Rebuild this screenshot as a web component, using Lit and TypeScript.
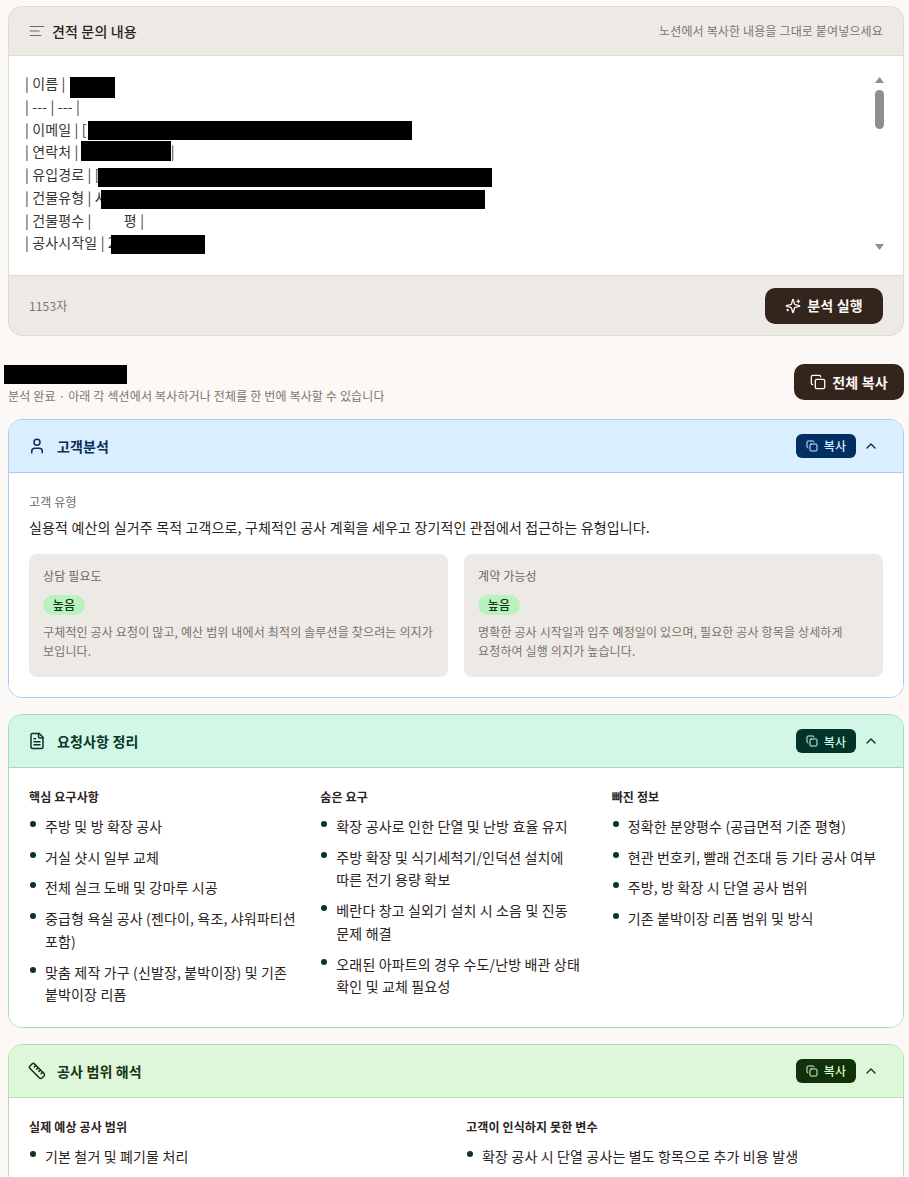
import { LitElement, html, css, svg } from "lit";
import { customElement } from "lit/decorators.js";

const icon = (body: unknown, cls = "") => html`<svg class="ic ${cls}" viewBox="0 0 24 24" fill="none" stroke="currentColor" stroke-width="2" stroke-linecap="round" stroke-linejoin="round">${body}</svg>`;
const copyIc = svg`<rect x="8" y="8" width="14" height="14" rx="2"/><path d="M4 16c-1.100 0-2-.9-2-2V4c0-1.100.9-2 2-2h10c1.100 0 2 .9 2 2"/>`;
const chevron = svg`<path d="m6 15 6-6 6 6"/>`;
const notes = svg`<path d="M21 6H3M15 12H3M17 18H3"/>`;
const user = svg`<path d="M19 21v-2a4 4 0 0 0-4-4H9a4 4 0 0 0-4 4v2"/><circle cx="12" cy="7" r="4"/>`;
const file = svg`<path d="M15 2H6a2 2 0 0 0-2 2v16a2 2 0 0 0 2 2h12a2 2 0 0 0 2-2V7Z"/><path d="M14 2v4a2 2 0 0 0 2 2h4M10 9H8M16 13H8M16 17H8"/>`;
const ruler = svg`<path d="M21.300 15.300a2.400 2.400 0 0 1 0 3.400l-2.600 2.600a2.400 2.400 0 0 1-3.400 0L2.700 8.700a2.410 2.410 0 0 1 0-3.400l2.600-2.600a2.410 2.410 0 0 1 3.400 0Z"/><path d="m14.500 12.500 2-2M11.500 9.500l2-2M8.500 6.500l2-2M17.500 15.500l2-2"/>`;
const sparkle = svg`<path d="M9.937 15.500A2 2 0 0 0 8.500 14.063l-6.135-1.582a.5.5 0 0 1 0-.962L8.500 9.936A2 2 0 0 0 9.937 8.500l1.582-6.135a.5.5 0 0 1 .963 0L14.063 8.500A2 2 0 0 0 15.500 9.937l6.135 1.581a.5.5 0 0 1 0 .964L15.500 14.063a2 2 0 0 0-1.437 1.437l-1.582 6.135a.5.5 0 0 1-.963 0z"/><path d="M20 3v4M22 5h-4M4 17v2M5 18H3"/>`;

const r = (w: number, h: number, off: number, ml = 0) => html`<span class="redact" style="width:${w}px;height:${h}px;vertical-align:${off}px;margin-left:${ml}px"></span>`;

@customElement("sec-card")
class SecCard extends LitElement {
  static properties = { heading: {}, tone: {} };
  heading = "";
  tone = "blue";
  ico: unknown = null;
  static styles = css`
    :host { display: block; }
    .card { border: 1px solid var(--bd); border-radius: 14px; overflow: hidden; background: #fff; }
    .blue { --bd: #a9cdf2; --hd: #d9efff; --ink: #0a2c57; --btn: #022f63; --btx: #d9efff; }
    .mint { --bd: #9fdcc0; --hd: #d2f7e6; --ink: #07352a; --btn: #03342a; --btx: #d2f7e6; }
    .lime { --bd: #b3dead; --hd: #def6da; --ink: #143414; --btn: #0f3208; --btx: #def6da; }
    .head { display: flex; align-items: center; height: 53px; padding: 0 24px 0 19px; background: var(--hd); border-bottom: 1px solid var(--bd); color: var(--ink); box-sizing: border-box; letter-spacing: .15px; }
    .ic { width: 18px; height: 18px; flex: none; }
    h3 { margin: 0 0 0 11px; font-size: 14px; font-weight: 700; flex: 1; color: var(--ink); }
    button { font: inherit; letter-spacing: inherit; display: flex; align-items: center; gap: 6px; height: 24px; width: 60px; justify-content: center; border: 0; border-radius: 6px; background: var(--btn); color: var(--btx); font-size: 12px; font-weight: 500; padding: 0; }
    button .ic { width: 12px; height: 12px; }
    .ic.chev { margin-left: 7px; width: 16px; height: 16px; }
  `;
  render() {
    return html`<section class="card ${this.tone}">
      <div class="head">
        ${icon(this.ico, "lead")}
        <h3>${this.heading}</h3>
        <button>${icon(copyIc)}복사</button>
        ${icon(chevron, "chev")}
      </div>
      <slot></slot>
    </section>`;
  }
}

@customElement("app-root")
class AppRoot extends LitElement {
  static styles = css`
    :host { display: block; height: 1177px; overflow: hidden; background: #fcf8f5; color: #2b2320; font-family: "Noto Sans CJK KR", "Noto Sans", sans-serif; font-size: 14px; line-height: 1.625; letter-spacing: .15px; word-break: keep-all; }
    * { box-sizing: border-box; }
    .page { display: flex; flex-direction: column; padding: 6px 5px 0 8px; }
    .redact { display: inline-block; background: #000; }
    .ic { width: 16px; height: 16px; flex: none; }

    .input { border: 1px solid #dfdbd6; border-radius: 14px; overflow: hidden; background: #edeae6; }
    .ihead { display: flex; align-items: center; height: 49px; padding: 0 20px 0 19px; border-bottom: 1px solid #dfdbd6; }
    .ihead .ic { width: 18px; height: 18px; stroke-width: 1.600; color: #6f6a65; }
    .ihead strong { margin-left: 6px; font-size: 14px; font-weight: 500; color: #2b2320; flex: 1; }
    .ihead small { font-size: 12px; color: #7c756f; }
    .ibody { position: relative; height: 219px; background: #fff; padding: 16px; overflow: hidden; white-space: nowrap; color: #3a3531; }
    .ibody .row { height: 22.750px; }
    .gap7 { display: inline-block; width: 29px; }
    .sb { position: absolute; top: 21px; right: 19px; width: 9px; height: 173px; }
    .sb i { position: absolute; left: 0; display: block; background: #8f8f8f; }
    .up { top: 0; width: 9px; height: 6px; clip-path: polygon(50% 0, 100% 100%, 0 100%); }
    .down { bottom: 0; width: 9px; height: 6px; clip-path: polygon(0 0, 100% 0, 50% 100%); }
    .sb .thumb { top: 13px; width: 9px; height: 39px; border-radius: 5px; }
    .ifoot { display: flex; align-items: center; justify-content: space-between; height: 60px; padding: 0 20px; border-top: 1px solid #dfdbd6; font-size: 12px; color: #7c756f; }
    .dark { font: inherit; letter-spacing: inherit; display: flex; align-items: center; justify-content: center; gap: 6px; height: 36px; border: 0; border-radius: 10px; background: #33251c; color: #fcf8f5; font-size: 14px; font-weight: 700; padding: 0; }
    .run { width: 118px; }
    .all { width: 110px; }

    .summary { display: flex; align-items: flex-start; justify-content: space-between; margin: 28px 0 19px; height: 36px; }
    .summary .ttl { display: block; margin: 1px 0 0 -4px; height: 19px; width: 123px; }
    .summary p { margin: 1.500px 0 0; font-size: 12px; line-height: 19px; color: #7c756f; }

    sec-card { margin-bottom: 16px; }
    .body { padding: 20px; background: #fff; }
    .lbl { font-size: 12px; color: #6f6862; line-height: 19.500px; margin-top: -1px; }
    .desc { margin: 4px 0 16px; color: #2b2320; }
    .two { display: grid; grid-template-columns: 1fr 1fr; gap: 16px; }
    .box { background: #edeae6; border-radius: 8px; padding: 13px 14px; height: 123px; }
    .pill { display: block; width: 42px; height: 20px; margin: 9px 0 7px; border-radius: 10px; background: #b9f2bf; color: #0e3a16; font-size: 12px; font-weight: 500; line-height: 20px; text-align: center; }
    .box p { margin: 0; font-size: 12px; color: #79726c; line-height: 19.500px; }

    .cols { display: grid; gap: 20px; }
    .c3 { grid-template-columns: repeat(3, 1fr); padding-bottom: 21px; }
    .c2 { grid-template-columns: repeat(2, 1fr); }
    h4 { margin: -1px 0 8px; font-size: 12px; font-weight: 700; line-height: 19.500px; color: #2b2320; }
    ul { list-style: none; margin: 0; padding: 0; display: flex; flex-direction: column; gap: 8px; }
    li { position: relative; padding-left: 16px; color: #2b2320; }
    li::before { content: ""; position: absolute; left: 1px; top: 6px; width: 6px; height: 6px; border-radius: 50%; background: var(--dot); }
    .m { --dot: #07352a; }
    .l { --dot: #143414; }
  `;

  render() {
    const rows = [
      html`| 이름 | ${r(45, 21, -9, 1)}`,
      html`| --- | --- |`,
      html`| 이메일 | [${r(324, 19, -5, 1)}`,
      html`| 연락처 | ${r(90, 20, -4, -1)}|`,
      html`| 유입경로 | [${r(394, 19, -7, -2)}`,
      html`| 건물유형 | 사${r(384, 19, -6, -7)}`,
      html`| 건물평수 | <span class="gap7"></span>평 |`,
      html`| 공사시작일 | 2${r(94, 19, -6, -5)}`,
    ];
    const core = ["주방 및 방 확장 공사", "거실 샷시 일부 교체", "전체 실크 도배 및 강마루 시공", "중급형 욕실 공사 (젠다이, 욕조, 샤워파티션 포함)", "맞춤 제작 가구 (신발장, 붙박이장) 및 기존 붙박이장 리폼"];
    const hidden = ["확장 공사로 인한 단열 및 난방 효율 유지", "주방 확장 및 식기세척기/인덕션 설치에 따른 전기 용량 확보", "베란다 창고 실외기 설치 시 소음 및 진동 문제 해결", "오래된 아파트의 경우 수도/난방 배관 상태 확인 및 교체 필요성"];
    const missing = ["정확한 분양평수 (공급면적 기준 평형)", "현관 번호키, 빨래 건조대 등 기타 공사 여부", "주방, 방 확장 시 단열 공사 범위", "기존 붙박이장 리폼 범위 및 방식"];
    const list = (a: string[]) => html`<ul>${a.map((t) => html`<li>${t}</li>`)}</ul>`;
    return html`<div class="page">
      <section class="input">
        <div class="ihead">${icon(notes)}<strong>견적 문의 내용</strong><small>노션에서 복사한 내용을 그대로 붙여넣으세요</small></div>
        <div class="ibody">
          ${rows.map((x) => html`<div class="row">${x}</div>`)}
          <div class="sb"><i class="up"></i><i class="thumb"></i><i class="down"></i></div>
        </div>
        <div class="ifoot"><span>1153자</span><button class="dark run">${icon(sparkle)}분석 실행</button></div>
      </section>

      <div class="summary">
        <div><span class="redact ttl"></span><p>분석 완료 · 아래 각 섹션에서 복사하거나 전체를 한 번에 복사할 수 있습니다</p></div>
        <button class="dark all">${icon(copyIc)}전체 복사</button>
      </div>

      <sec-card heading="고객분석" tone="blue" .ico=${user}>
        <div class="body">
          <div class="lbl">고객 유형</div>
          <p class="desc">실용적 예산의 실거주 목적 고객으로, 구체적인 공사 계획을 세우고 장기적인 관점에서 접근하는 유형입니다.</p>
          <div class="two">
            <div class="box"><div class="lbl">상담 필요도</div><span class="pill">높음</span><p>구체적인 공사 요청이 많고, 예산 범위 내에서 최적의 솔루션을 찾으려는 의지가 보입니다.</p></div>
            <div class="box"><div class="lbl">계약 가능성</div><span class="pill">높음</span><p>명확한 공사 시작일과 입주 예정일이 있으며, 필요한 공사 항목을 상세하게 요청하여 실행 의지가 높습니다.</p></div>
          </div>
        </div>
      </sec-card>

      <sec-card heading="요청사항 정리" tone="mint" .ico=${file}>
        <div class="body m cols c3">
          <div><h4>핵심 요구사항</h4>${list(core)}</div>
          <div><h4>숨은 요구</h4>${list(hidden)}</div>
          <div><h4>빠진 정보</h4>${list(missing)}</div>
        </div>
      </sec-card>

      <sec-card heading="공사 범위 해석" tone="lime" .ico=${ruler}>
        <div class="body l cols c2">
          <div><h4>실제 예상 공사 범위</h4>${list(["기본 철거 및 폐기물 처리"])}</div>
          <div><h4>고객이 인식하지 못한 변수</h4>${list(["확장 공사 시 단열 공사는 별도 항목으로 추가 비용 발생"])}</div>
        </div>
      </sec-card>
    </div>`;
  }
}
void SecCard; void AppRoot;
